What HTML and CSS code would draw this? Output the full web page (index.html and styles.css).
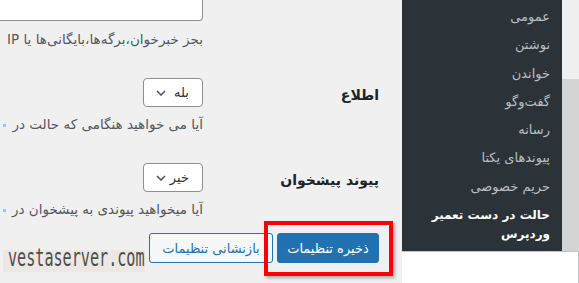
FILE: index.html
```html
<!DOCTYPE html>
<html lang="fa" dir="rtl">
<head>
  <meta charset="UTF-8" />
  <title>تنظیمات حالت تعمیر</title>
  <link rel="stylesheet" href="styles.css">
</head>
<body>
  <div class="screen">
    <aside class="side">
      <div class="side-top">
        <div class="gutter">
          <div class="gutter-light"></div>
          <div class="gutter-dark"></div>
        </div>
        <ul class="submenu">
          <li>عمومی</li>
          <li>نوشتن</li>
          <li>خواندن</li>
          <li>گفت‌وگو</li>
          <li>رسانه</li>
          <li>پیوندهای یکتا</li>
          <li>حریم خصوصی</li>
          <li class="current">حالت در دست تعمیر وردپرس</li>
        </ul>
      </div>
      <div class="side-bottom"></div>
    </aside>

    <main class="content">
      <div class="form-row first">
        <div class="th"></div>
        <div class="td">
          <div class="textarea"></div>
          <p class="description">بجز خبرخوان،برگه‌ها،بایگانی‌ها یا IP</p>
        </div>
      </div>

      <div class="form-row">
        <div class="th"><label>اطلاع</label></div>
        <div class="td">
          <div class="select">
            <span>بله</span>
            <svg width="10" height="6" viewBox="0 0 10 6"><path d="M1 1l4 4 4-4" fill="none" stroke="#50575e" stroke-width="1.6"/></svg>
          </div>
          <p class="description">آیا می خواهید هنگامی که حالت در <span class="link-edge"></span></p>
        </div>
      </div>

      <div class="form-row">
        <div class="th"><label>پیوند پیشخوان</label></div>
        <div class="td">
          <div class="select">
            <span>خیر</span>
            <svg width="10" height="6" viewBox="0 0 10 6"><path d="M1 1l4 4 4-4" fill="none" stroke="#50575e" stroke-width="1.6"/></svg>
          </div>
          <p class="description">آیا میخواهید پیوندی به پیشخوان در <span class="link-edge"></span></p>
        </div>
      </div>

      <div class="submit">
        <button class="btn btn-primary">ذخیره تنظیمات</button>
        <button class="btn btn-secondary">بازنشانی تنظیمات</button>
        <div class="highlight"></div>
      </div>
    </main>
  </div>

  <div class="watermark"><span>vestaserver.com</span></div>
</body>
</html>
```

FILE: styles.css
```css
* {
  margin: 0;
  padding: 0;
  box-sizing: border-box;
}

html, body {
  width: 579px;
  height: 283px;
  overflow: hidden;
}

body {
  font-family: 'DejaVu Sans', sans-serif;
  font-size: 13px;
  background: #f0f0f1;
  color: #1d2327;
}

.screen {
  display: flex;
  height: 283px;
}

/* right column: admin menu */
.side {
  width: 177px;
  flex-shrink: 0;
  display: flex;
  flex-direction: column;
}

.side-top {
  display: flex;
  height: 251px;
}

.gutter {
  width: 17px;
  display: flex;
  flex-direction: column;
}

.gutter-light {
  height: 79px;
  background: #f0f0f1;
}

.gutter-dark {
  flex: 1;
  background: #d4d4d4;
}

.submenu {
  width: 160px;
  background: #2c3338;
  list-style: none;
  padding: 3px 12px 0 0;
}

.submenu li {
  line-height: 28.3px;
  color: #b9bec3;
  font-size: 13px;
  white-space: nowrap;
}

.submenu li.current {
  color: #fff;
  font-weight: bold;
  font-size: 12px;
  line-height: 19px;
  padding-top: 5px;
  white-space: normal;
}

.side-bottom {
  flex: 1;
  background: #fff;
  border-top: 1px solid #c3c4c7;
  border-right: 1px solid #c3c4c7;
}

/* main settings */
.content {
  flex: 1;
  min-width: 0;
  padding-right: 23px;
}

.form-row {
  display: flex;
  margin-top: 30px;
}

.form-row.first {
  margin-top: 0;
}

.th {
  width: 176px;
  flex-shrink: 0;
}

.th label {
  display: block;
  padding-top: 8px;
  line-height: 19px;
  font-size: 14px;
  font-weight: bold;
}

.td {
  flex: 1;
  min-width: 0;
  white-space: nowrap;
}

.textarea {
  width: 400px;
  height: 21px;
  background: #fff;
  border: 1px solid #8c8f94;
  border-top: none;
  border-radius: 0 0 4px 4px;
}

.description {
  margin-top: 9px;
  line-height: 18px;
  font-size: 13.5px;
  color: #50575e;
}

.select + .description {
  margin-top: 8px;
}

.link-edge {
  display: inline-block;
  width: 3px;
  height: 3px;
  background: #9ec2e6;
  vertical-align: middle;
  margin-right: 2px;
}

.select {
  width: 60px;
  height: 29px;
  background: #fff;
  border: 1px solid #8c8f94;
  border-radius: 4px;
  display: flex;
  align-items: center;
  justify-content: space-between;
  padding: 0 13px 0 12px;
  font-size: 13px;
  color: #2c3338;
}

.submit {
  position: relative;
  display: flex;
  gap: 4px;
  margin-top: 15px;
}

.btn {
  height: 30px;
  padding: 0 8px;
  border-radius: 3px;
  font-family: inherit;
  font-size: 13px;
  border: 1px solid #2271b1;
  white-space: nowrap;
}

.btn-primary {
  width: 102px;
  background: #2271b1;
  color: #fff;
}

.btn-secondary {
  width: 124px;
  background: #f6f7f7;
  color: #2271b1;
}

.highlight {
  position: absolute;
  top: -12px;
  right: -14px;
  width: 129px;
  height: 55px;
  border: 4px solid #ff0000;
  box-shadow: 2px 2px 3px rgba(0, 0, 0, 0.3);
}

.watermark {
  position: absolute;
  left: 3px;
  top: 250px;
  width: 142px;
  height: 22px;
  background: #ebe8e5;
  direction: ltr;
}

.watermark span {
  display: inline-block;
  white-space: nowrap;
  font-family: 'DejaVu Sans Mono', monospace;
  font-size: 24px;
  line-height: 22px;
  color: #4d4d4d;
  transform: scaleX(0.63);
  transform-origin: left center;
  margin-left: 5px;
  margin-top: -3px;
}
```
